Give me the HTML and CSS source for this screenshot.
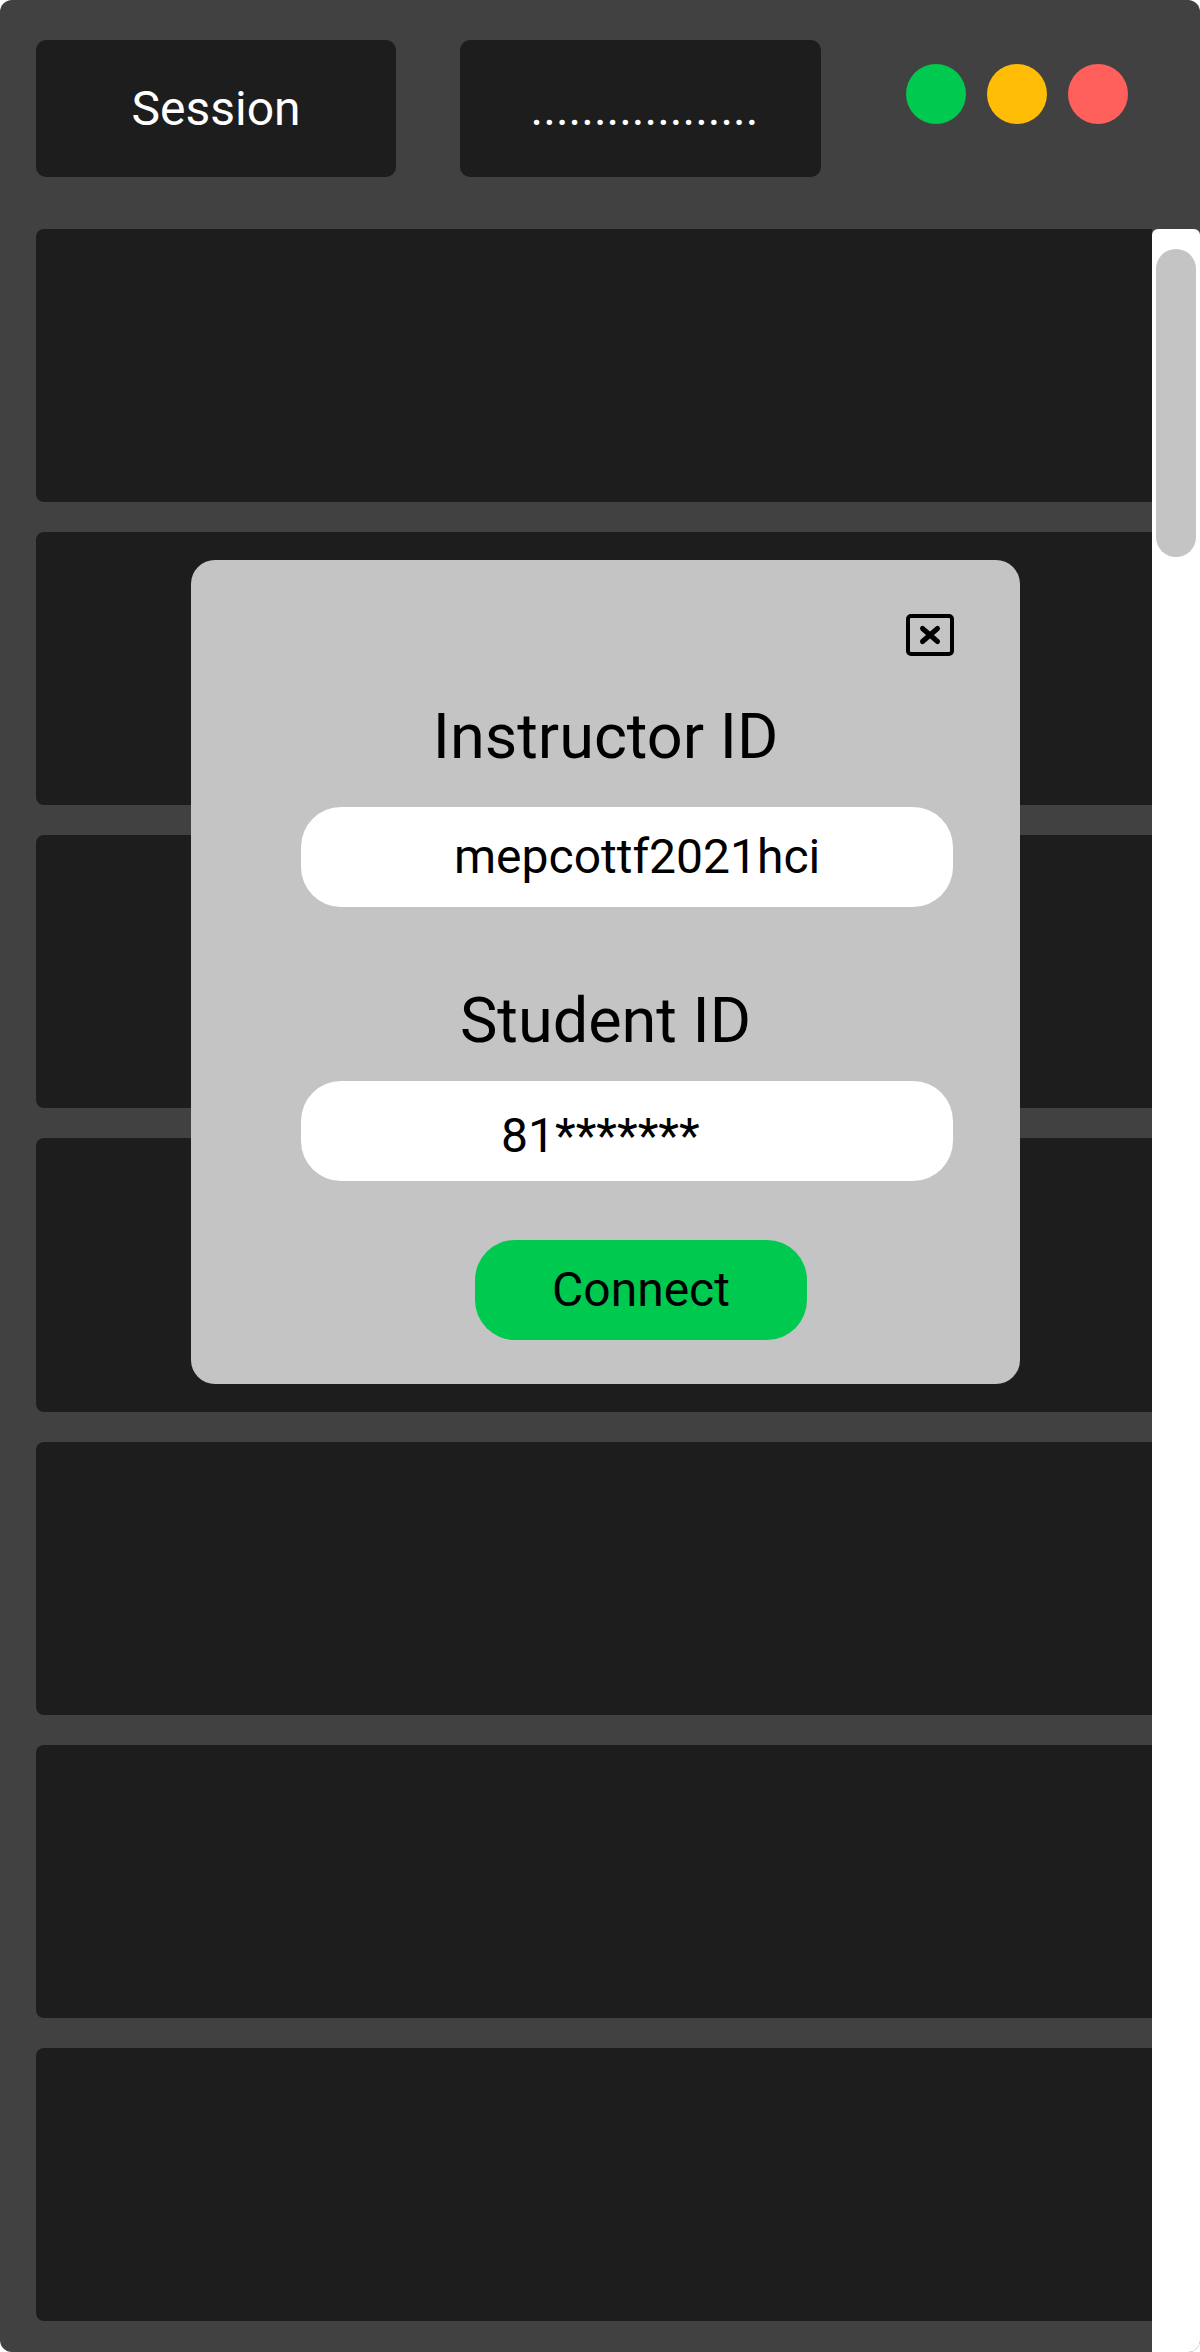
FILE: index.html
```html
<!DOCTYPE html>
<html lang="en">
<head>
<meta charset="utf-8">
<title>Session</title>
<link rel="stylesheet" href="styles.css">
</head>
<body>
<div class="window">
  <header class="topbar">
    <div class="tab tab-session">Session</div>
    <div class="tab tab-dots">..................</div>
    <div class="lights">
      <span class="light light-green"></span>
      <span class="light light-yellow"></span>
      <span class="light light-red"></span>
    </div>
  </header>
  <div class="main">
    <div class="rows">
      <div class="row"></div>
      <div class="row"></div>
      <div class="row"></div>
      <div class="row"></div>
      <div class="row"></div>
      <div class="row"></div>
      <div class="row"></div>
    </div>
    <div class="scroll-track">
      <div class="scroll-thumb"></div>
    </div>
  </div>

  <div class="modal">
    <div class="modal-top">
      <svg class="close-icon" width="48" height="42" viewBox="0 0 48 42" aria-label="Close">
        <rect x="2" y="2" width="44" height="38" rx="3" fill="none" stroke="#000" stroke-width="4"/>
        <path d="M16.5 14.5 L31.5 27.5 M31.5 14.5 L16.5 27.5" stroke="#000" stroke-width="5" stroke-linecap="round" fill="none"/>
      </svg>
    </div>
    <div class="label label-instructor">Instructor ID</div>
    <div class="field field-instructor">mepcottf2021hci</div>
    <div class="label label-student">Student ID</div>
    <div class="field field-student">81*******</div>
    <div class="connect">Connect</div>
  </div>
</div>
</body>
</html>
```

FILE: styles.css
```css
* { box-sizing: border-box; }
html, body { margin: 0; padding: 0; }
body {
  background: #ffffff;
  font-family: Roboto, "Liberation Sans", sans-serif;
  width: 1200px;
  height: 2352px;
  overflow: hidden;
}
.window {
  position: relative;
  width: 1200px;
  height: 2352px;
  background: #414141;
  border-radius: 12px;
  display: flex;
  flex-direction: column;
  overflow: hidden;
}
.topbar {
  height: 229px;
  flex: none;
  display: flex;
  align-items: flex-start;
  padding: 40px 0 0 36px;
}
.tab {
  height: 137px;
  background: #1d1d1d;
  border-radius: 10px;
  color: #ffffff;
  font-size: 48px;
  line-height: 137px;
  text-align: center;
}
.tab-session { width: 360px; }
.tab-dots { width: 361px; margin-left: 64px; padding-left: 8px; }
.lights {
  display: flex;
  gap: 21px;
  margin-left: 85px;
  margin-top: 24px;
}
.light {
  width: 60px;
  height: 60px;
  border-radius: 50%;
  display: block;
}
.light-green { background: #00c94f; }
.light-yellow { background: #ffbd05; }
.light-red { background: #ff605c; }

.main {
  flex: 1;
  display: flex;
}
.rows {
  flex: 1;
  display: flex;
  flex-direction: column;
  gap: 30px;
  padding: 0 0 31px 36px;
}
.row {
  flex: 1;
  background: #1d1d1d;
  border-radius: 8px 0 0 8px;
}
.scroll-track {
  width: 48px;
  flex: none;
  background: #ffffff;
  border-radius: 6px 6px 0 0;
  padding: 20px 4px 0 4px;
}
.scroll-thumb {
  width: 40px;
  height: 308px;
  background: #c4c4c4;
  border-radius: 20px;
}

.modal {
  position: absolute;
  left: 191px;
  top: 560px;
  width: 829px;
  height: 824px;
  background: #c4c4c4;
  border-radius: 24px;
  display: flex;
  flex-direction: column;
  color: #000000;
}
.modal-top {
  display: flex;
  justify-content: flex-end;
  padding: 54px 66px 0 0;
  height: 96px;
}
.close-icon { display: block; }
.label {
  font-size: 63px;
  line-height: 74px;
  text-align: center;
}
.label-instructor { margin-top: 44px; }
.label-student { margin-top: 77px; }
.field {
  width: 652px;
  height: 100px;
  margin-left: 110px;
  background: #ffffff;
  border-radius: 40px;
  font-size: 48px;
  line-height: 100px;
  white-space: nowrap;
}
.field-instructor { margin-top: 33px; padding-left: 153px; }
.field-student { margin-top: 23px; padding-left: 200px; padding-top: 9px; line-height: 91px; }
.connect {
  width: 332px;
  height: 100px;
  margin-top: 59px;
  margin-left: 284px;
  background: #00c94f;
  border-radius: 40px;
  font-size: 48px;
  line-height: 100px;
  text-align: center;
}
```
